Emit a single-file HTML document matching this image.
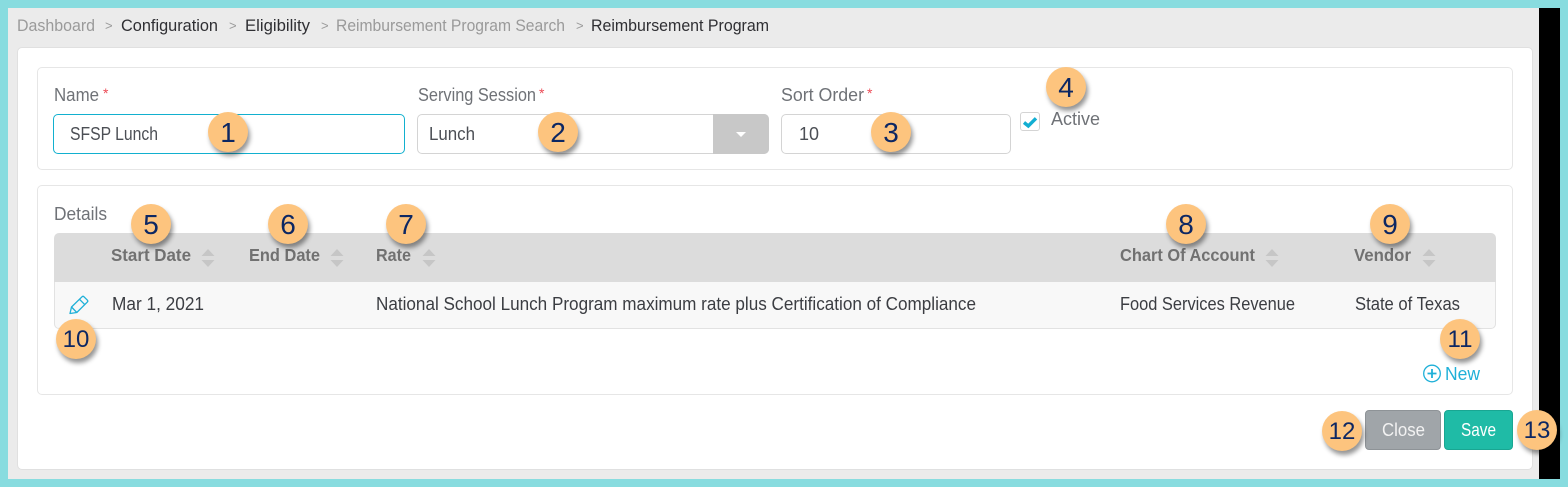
<!DOCTYPE html>
<html lang="en">
<head>
<meta charset="utf-8">
<title>Reimbursement Program</title>
<style>
html,body{margin:0;padding:0;width:1568px;height:487px;overflow:hidden;background:#88dcdf;font-family:"Liberation Sans",sans-serif}
.a{position:absolute;box-sizing:border-box}
#bg{left:8px;top:8px;width:1531px;height:471px;background:#ebebeb}
#blk{left:1539px;top:8px;width:21px;height:471px;background:#000}
#card{left:17px;top:47px;width:1516px;height:423px;background:#fff;border:1px solid #e0e0e0;border-radius:5px}
.sec{background:#fff;border:1px solid #e6e6e6;border-radius:5px;left:37px;width:1476px}
.inp{background:#fff;border:1px solid #d4d4d4;border-radius:5px;top:114px;height:40px}
#thead{left:54px;top:233px;width:1442px;height:49px;background:#dcdcdc;border-radius:5px 5px 0 0}
#trow{left:54px;top:282px;width:1442px;height:47px;background:#f8f8f8;border:1px solid #e2e2e2;border-top:0;border-radius:0 0 5px 5px}
.btn{top:410px;height:40px;border-radius:4px}
.b{width:40px;height:40px;border-radius:50%;background:#fdc47e;box-shadow:2px 4px 5px rgba(0,0,0,.42);color:#0d2763;font-size:28px;line-height:41px;text-align:center}
.d{font-size:24px}
svg{position:absolute;left:0;top:0}
</style>
</head>
<body>
<div class="a" id="bg"></div>
<div class="a" id="blk"></div>
<div class="a" id="card"></div>
<div class="a sec" style="top:67px;height:103px"></div>
<div class="a sec" style="top:185px;height:210px"></div>
<div class="a inp" style="left:53px;width:352px;border-color:#12b0cf"></div>
<div class="a inp" style="left:417px;width:352px"></div>
<div class="a" style="left:713px;top:114px;width:56px;height:40px;background:#c8c8c8;border-radius:0 5px 5px 0"></div>
<div class="a inp" style="left:781px;width:230px"></div>
<div class="a" style="left:1020px;top:112px;width:20px;height:19px;background:#fff;border:1px solid #d4d4d4;border-radius:3px"></div>
<div class="a" id="thead"></div>
<div class="a" id="trow"></div>
<div class="a btn" style="left:1365px;width:76px;background:#a0a5a9;border:1px solid #8e9397"></div>
<div class="a btn" style="left:1444px;width:69px;background:#1fbba6;border:1px solid #19a692"></div>

<svg width="1568" height="487" viewBox="0 0 1568 487" font-family="'Liberation Sans',sans-serif" font-size="17">
  <g fill="#9a9a9a">
    <text x="17" y="31" textLength="78" lengthAdjust="spacingAndGlyphs">Dashboard</text>
    <text x="336" y="31" textLength="229" lengthAdjust="spacingAndGlyphs">Reimbursement Program Search</text>
  </g>
  <g fill="#9a9a9a" font-size="13">
    <text x="105" y="30">&gt;</text><text x="229" y="30">&gt;</text><text x="321" y="30">&gt;</text><text x="576" y="30">&gt;</text>
  </g>
  <g fill="#2f2f33">
    <text x="121" y="31" textLength="97" lengthAdjust="spacingAndGlyphs">Configuration</text>
    <text x="245" y="31" textLength="65" lengthAdjust="spacingAndGlyphs">Eligibility</text>
    <text x="591" y="31" textLength="178" lengthAdjust="spacingAndGlyphs">Reimbursement Program</text>
  </g>
  <g fill="#6f7277" font-size="18">
    <text x="54" y="101" textLength="45" lengthAdjust="spacingAndGlyphs">Name</text>
    <text x="418" y="101" textLength="118" lengthAdjust="spacingAndGlyphs">Serving Session</text>
    <text x="781" y="101" textLength="83" lengthAdjust="spacingAndGlyphs">Sort Order</text>
    <text x="1051" y="125" textLength="49" lengthAdjust="spacingAndGlyphs">Active</text>
    <text x="54" y="220" textLength="53" lengthAdjust="spacingAndGlyphs">Details</text>
  </g>
  <g fill="#ec4a55" font-size="14">
    <text x="103" y="98">*</text><text x="539" y="98">*</text><text x="867" y="98">*</text>
  </g>
  <g fill="#4c4f55" font-size="18">
    <text x="70" y="140" textLength="88" lengthAdjust="spacingAndGlyphs">SFSP Lunch</text>
    <text x="429" y="140" textLength="46" lengthAdjust="spacingAndGlyphs">Lunch</text>
    <text x="799" y="140" textLength="20" lengthAdjust="spacingAndGlyphs">10</text>
  </g>
  <path d="M736 132h10l-5 5z" fill="#fff"/>
  <path d="M1024 122.500l4.300 3.500 7.700-7.700" fill="none" stroke="#12aed2" stroke-width="3.400"/>
  <g fill="#717171" font-size="17.500" font-weight="bold">
    <text x="111" y="261" textLength="80" lengthAdjust="spacingAndGlyphs">Start Date</text>
    <text x="249" y="261" textLength="71" lengthAdjust="spacingAndGlyphs">End Date</text>
    <text x="376" y="261" textLength="35" lengthAdjust="spacingAndGlyphs">Rate</text>
    <text x="1120" y="261" textLength="135" lengthAdjust="spacingAndGlyphs">Chart Of Account</text>
    <text x="1354" y="261" textLength="57" lengthAdjust="spacingAndGlyphs">Vendor</text>
  </g>
  <g fill="#c6c6c6">
    <path d="M201.500 256l6.500-7 6.500 7zM201.500 260l6.500 7 6.500-7z"/>
    <path d="M330.500 256l6.500-7 6.500 7zM330.500 260l6.500 7 6.500-7z"/>
    <path d="M422.500 256l6.500-7 6.500 7zM422.500 260l6.500 7 6.500-7z"/>
    <path d="M1265.500 256l6.500-7 6.500 7zM1265.500 260l6.500 7 6.500-7z"/>
    <path d="M1422.500 256l6.500-7 6.500 7zM1422.500 260l6.500 7 6.500-7z"/>
  </g>
  <g fill="#3b3d42" font-size="18">
    <text x="112" y="310" textLength="92" lengthAdjust="spacingAndGlyphs">Mar 1, 2021</text>
    <text x="376" y="310" textLength="600" lengthAdjust="spacingAndGlyphs">National School Lunch Program maximum rate plus Certification of Compliance</text>
    <text x="1120" y="310" textLength="175" lengthAdjust="spacingAndGlyphs">Food Services Revenue</text>
    <text x="1355" y="310" textLength="105" lengthAdjust="spacingAndGlyphs">State of Texas</text>
  </g>
  <g fill="none" stroke="#1fb0d8" stroke-width="1.300" stroke-linejoin="round">
    <path d="M70 313.500l1.500-6.500L82 296.800q1-1 2 0l3.300 3.300q1 1 0 2L76.800 312.500z"/>
    <path d="M79.500 299.300l5.500 5.500M71.500 307l5.300 5.500"/>
  </g>
  <circle cx="1432" cy="373.500" r="8.300" fill="none" stroke="#1fb0d8" stroke-width="1.300"/>
  <path d="M1427.500 373.500h9M1432 369v9" fill="none" stroke="#1fb0d8" stroke-width="1.800"/>
  <text x="1445" y="380" fill="#1fb0d8" font-size="18" textLength="35" lengthAdjust="spacingAndGlyphs">New</text>
  <text x="1382" y="436" fill="#f2f2f2" font-size="18" textLength="43" lengthAdjust="spacingAndGlyphs">Close</text>
  <text x="1461" y="436" fill="#fff" font-size="18" textLength="35" lengthAdjust="spacingAndGlyphs">Save</text>
</svg>

<div class="a b" style="left:208px;top:112px">1</div>
<div class="a b" style="left:538px;top:112px">2</div>
<div class="a b" style="left:871px;top:112px">3</div>
<div class="a b" style="left:1046px;top:67px">4</div>
<div class="a b" style="left:131px;top:204px">5</div>
<div class="a b" style="left:268px;top:204px">6</div>
<div class="a b" style="left:386px;top:204px">7</div>
<div class="a b" style="left:1166px;top:204px">8</div>
<div class="a b" style="left:1370px;top:204px">9</div>
<div class="a b d" style="left:56px;top:319px">10</div>
<div class="a b d" style="left:1440px;top:319px">11</div>
<div class="a b d" style="left:1322px;top:411px">12</div>
<div class="a b d" style="left:1517px;top:410px">13</div>
</body>
</html>
